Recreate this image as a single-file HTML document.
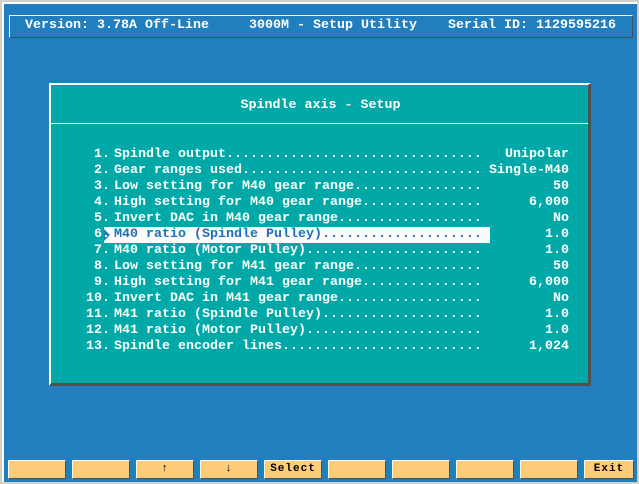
<!DOCTYPE html>
<html><head><style>
html,body{margin:0;padding:0;width:639px;height:484px;overflow:hidden;background:#d4d0c8;}
*{box-sizing:border-box;}
.mono{font-family:"Liberation Mono","DejaVu Sans Mono",monospace;font-size:13.33px;font-weight:bold;white-space:pre;line-height:16px;}
#scr{position:absolute;left:2px;top:2px;width:635px;height:480px;background:#217fbf;border-left:2px solid #fff;border-top:2px solid #fff;}
#hdr{position:absolute;left:9px;top:15px;width:624px;height:23px;border-top:1px solid #fff;border-left:1px solid #fff;border-bottom:1px solid #40506a;border-right:1px solid #40506a;color:#fff;}
.t{position:absolute;color:#fff;}
#dlg{position:absolute;left:49px;top:83px;width:542px;height:303px;background:#00a8a8;border-top:2px solid #fff;border-left:2px solid #fff;border-right:3px solid #505050;border-bottom:3px solid #505050;}
#sep{position:absolute;left:51px;top:123px;width:537px;height:1px;background:#fff;}
.lbl{position:absolute;left:114px;width:367px;overflow:hidden;color:#fff;}
.num{position:absolute;left:82px;width:28px;text-align:right;color:#fff;}
.val{position:absolute;right:70px;text-align:right;color:#fff;}
#hl{position:absolute;left:104px;top:227px;width:386px;height:16px;background:#fcfcfc;}
.btn{position:absolute;top:460px;width:58px;height:19px;background:#fccc78;border-top:1px solid #fff;border-left:1px solid #fff;border-right:1px solid #505050;border-bottom:1px solid #505050;font-family:"Liberation Mono",monospace;font-weight:bold;font-size:11px;text-align:center;line-height:17px;color:#000;letter-spacing:1px;}
</style></head><body>
<div id="scr"></div>
<div id="hdr"></div>
<div class="t mono" style="left:25px;top:18px;">Version: 3.78A Off-Line</div>
<div class="t mono" style="left:249px;top:18px;">3000M - Setup Utility</div>
<div class="t mono" style="left:448px;top:18px;">Serial ID: 1129595216</div>
<div id="dlg"></div>
<div id="sep"></div>
<div class="t mono" style="left:0;width:639px;text-align:center;top:98px;padding-left:2px;">Spindle axis - Setup</div>
<div id="hl"></div>
<svg style="position:absolute;left:104px;top:229px" width="6" height="12"><polygon points="0,0 6,6 0,12" fill="#217fbf"/></svg>

<div class="mono">
<div class="num" style="top:147px">1.</div><div class="lbl" style="top:147px">Spindle output..............................................</div><div class="val" style="top:147px">Unipolar</div>
<div class="num" style="top:163px">2.</div><div class="lbl" style="top:163px">Gear ranges used............................................</div><div class="val" style="top:163px">Single-M40</div>
<div class="num" style="top:179px">3.</div><div class="lbl" style="top:179px">Low setting for M40 gear range..............................</div><div class="val" style="top:179px">50</div>
<div class="num" style="top:195px">4.</div><div class="lbl" style="top:195px">High setting for M40 gear range.............................</div><div class="val" style="top:195px">6,000</div>
<div class="num" style="top:211px">5.</div><div class="lbl" style="top:211px">Invert DAC in M40 gear range................................</div><div class="val" style="top:211px">No</div>
<div class="num" style="top:227px">6.</div><div class="lbl" style="top:227px;color:#1f6fb8">M40 ratio (Spindle Pulley)..................................</div><div class="val" style="top:227px">1.0</div>
<div class="num" style="top:243px">7.</div><div class="lbl" style="top:243px">M40 ratio (Motor Pulley)....................................</div><div class="val" style="top:243px">1.0</div>
<div class="num" style="top:259px">8.</div><div class="lbl" style="top:259px">Low setting for M41 gear range..............................</div><div class="val" style="top:259px">50</div>
<div class="num" style="top:275px">9.</div><div class="lbl" style="top:275px">High setting for M41 gear range.............................</div><div class="val" style="top:275px">6,000</div>
<div class="num" style="top:291px">10.</div><div class="lbl" style="top:291px">Invert DAC in M41 gear range................................</div><div class="val" style="top:291px">No</div>
<div class="num" style="top:307px">11.</div><div class="lbl" style="top:307px">M41 ratio (Spindle Pulley)..................................</div><div class="val" style="top:307px">1.0</div>
<div class="num" style="top:323px">12.</div><div class="lbl" style="top:323px">M41 ratio (Motor Pulley)....................................</div><div class="val" style="top:323px">1.0</div>
<div class="num" style="top:339px">13.</div><div class="lbl" style="top:339px">Spindle encoder lines.......................................</div><div class="val" style="top:339px">1,024</div>
</div>

<div class="btn" style="left:8px"></div>
<div class="btn" style="left:72px"></div>
<div class="btn" style="left:136px">↑</div>
<div class="btn" style="left:200px">↓</div>
<div class="btn" style="left:264px">Select</div>
<div class="btn" style="left:328px"></div>
<div class="btn" style="left:392px"></div>
<div class="btn" style="left:456px"></div>
<div class="btn" style="left:520px"></div>
<div class="btn" style="left:584px;width:50px">Exit</div>
</body></html>
